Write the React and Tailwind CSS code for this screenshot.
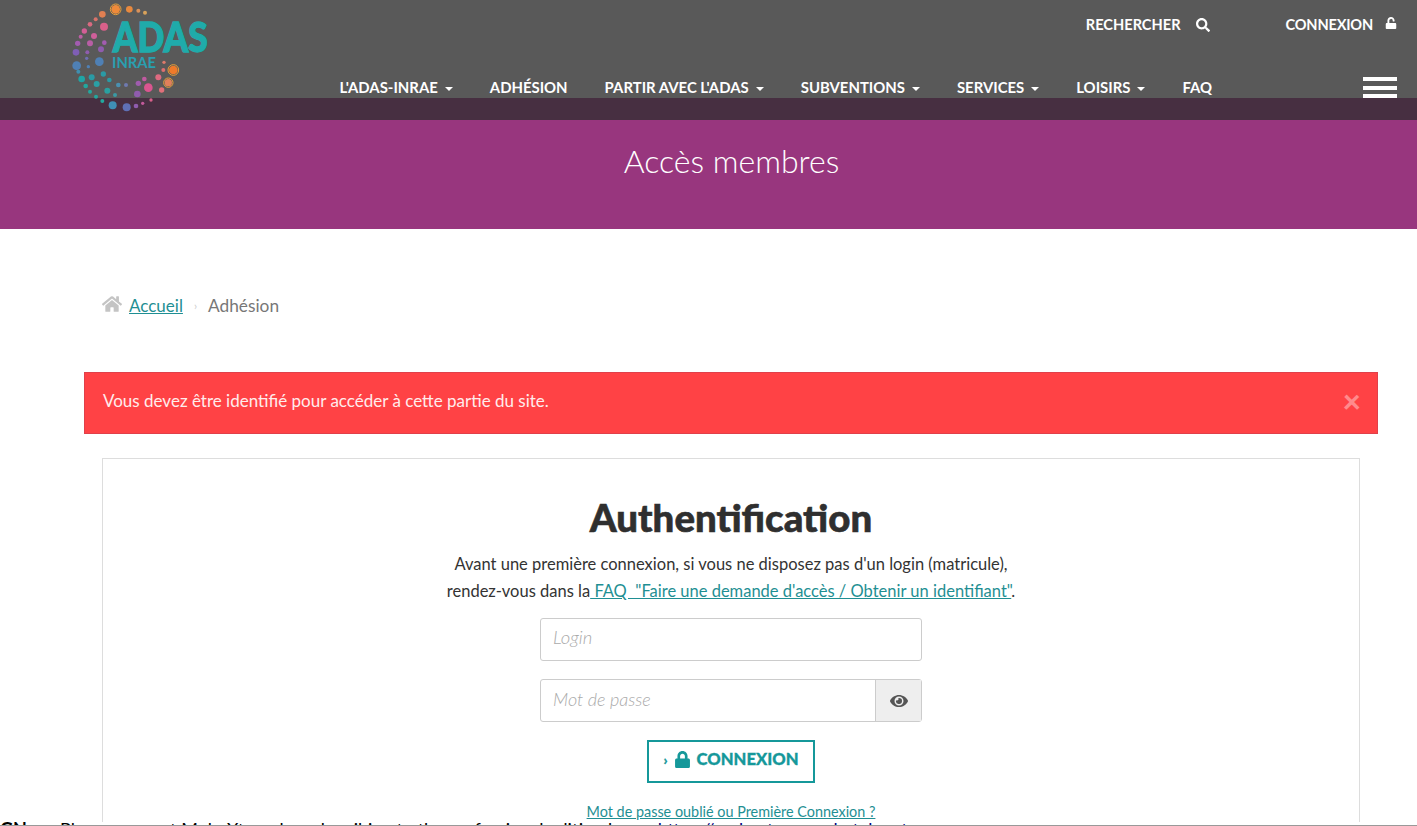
import React from 'react';
import { FaSearch, FaUnlock, FaHome, FaEye, FaLock } from 'react-icons/fa';

const navItems = [
  { label: "L'ADAS-INRAE", caret: true },
  { label: 'ADHÉSION' },
  { label: "PARTIR AVEC L'ADAS", caret: true },
  { label: 'SUBVENTIONS', caret: true },
  { label: 'SERVICES', caret: true },
  { label: 'LOISIRS', caret: true },
  { label: 'FAQ' },
];

// spiral dots of the logo: x, y, radius, colour (in 3x coords of the logo box)
const dots = [
  [285, 38, 6, '#d9a25a'], [265, 32, 6, '#d9915a'], [238, 28, 10, '#e8893e'], [197, 28, 13, '#ee8a3a'],
  [157, 43, 10, '#e07f52'], [137, 58, 6, '#d9736a'], [120, 73, 7, '#d96a80'], [103, 93, 8, '#d35f96'],
  [92, 110, 6, '#bd5ea5'], [83, 130, 8, '#a25cb0'], [78, 157, 10, '#7f5eb5'], [80, 197, 13, '#4f80b5'],
  [85, 215, 6, '#3f8fb0'], [95, 237, 10, '#1fa5a5'], [107, 258, 7, '#22a89e'], [120, 275, 6, '#22a89e'],
  [138, 290, 6, '#22a89e'], [157, 303, 6, '#22a89e'],
  [162, 80, 12, '#d9608a'], [132, 108, 9, '#cf5f9a'], [120, 130, 9, '#b85ea5'], [112, 157, 6, '#8f5cae'],
  [110, 175, 5, '#6f6fb2'], [115, 200, 5, '#4f80b5'], [125, 232, 9, '#2a9aa5'], [140, 252, 9, '#2aa0a5'],
  [172, 272, 9, '#2aa0a0'], [195, 285, 6, '#3a9aa5'],
  [163, 128, 7, '#a25cb0'], [153, 148, 9, '#8f5cae'], [148, 185, 13, '#4f80b5'], [160, 222, 8, '#2a9aa5'],
  [178, 240, 7, '#2a9aa5'], [205, 255, 7, '#4a90b0'], [228, 255, 6, '#6f7ab0'],
  [188, 316, 12, '#3f8fb5'], [230, 322, 12, '#5f70b5'], [258, 318, 7, '#8f5cae'], [278, 310, 5, '#c25a9a'],
  [303, 300, 5, '#d9608a'], [335, 270, 8, '#e0707a'], [355, 248, 11, '#e0805a'], [325, 232, 9, '#de6a80'],
  [340, 210, 6, '#de7070'], [342, 187, 5, '#de7a6a'], [370, 210, 13, '#ee7a2a'],
  [295, 263, 13, '#d9558f'], [262, 282, 10, '#8f5cae'], [265, 250, 8, '#9f5cae'], [283, 237, 7, '#c05aa0'],
];

function Logo() {
  return (
    <svg viewBox="0 0 600 375" className="absolute left-[50px] top-0 h-[125px] w-[200px]">
      {dots.map(([x, y, r, c], i) => (
        <circle key={i} cx={x} cy={y} r={r} fill={c} />
      ))}
      <circle cx="370" cy="210" r="16" fill="none" stroke="#e8a03a" strokeWidth="3" />
      <circle cx="197" cy="28" r="16" fill="none" stroke="#e8a03a" strokeWidth="3" />
      <circle cx="355" cy="248" r="14" fill="none" stroke="#e8a03a" strokeWidth="3" />
      <text x="188" y="155" fontFamily="Lato, sans-serif" fontWeight="900" fontSize="125" fill="#1fabaa" stroke="#1fabaa" strokeWidth="4" textLength="285" lengthAdjust="spacingAndGlyphs">ADAS</text>
      <text x="186" y="204" fontFamily="Lato, sans-serif" fontWeight="700" fontSize="44" fill="#2a9fb0" textLength="132" lengthAdjust="spacingAndGlyphs">INRAE</text>
    </svg>
  );
}

function Caret() {
  return <span className="ml-[7px] inline-block border-x-[4px] border-t-[4px] border-x-transparent border-t-white align-middle" />;
}

export default function App() {
  return (
    <div className="relative h-[826px] overflow-hidden bg-white font-['Lato',sans-serif] text-[#333]">
      <header className="bg-[#595959]">
        <div className="flex h-[98px] flex-col items-end text-white">
          <div className="flex h-[50px] items-center text-[14.6px] font-bold">
            <span className="flex items-center">RECHERCHER<FaSearch className="ml-[15px] text-[14px]" /></span>
            <span className="ml-[76px] mr-[20px] flex items-center tracking-[-0.2px]">CONNEXION<FaUnlock className="mb-[4px] ml-[12px] text-[12px]" /></span>
          </div>
          <div className="flex h-[48px] items-start">
            <nav className="mr-[205px] mt-[27px] flex gap-[37px] text-[14.9px] font-bold leading-[20px]">
              {navItems.map(item => (
                <span key={item.label}>{item.label}{item.caret && <Caret />}</span>
              ))}
            </nav>
          </div>
        </div>
        <div className="h-[22px] bg-[#472f41]" />
      </header>
      <Logo />
      <div className="absolute right-[20px] top-[77px] flex h-[21px] w-[34px] flex-col justify-between">
        <div className="h-[4px] bg-white" />
        <div className="h-[4px] bg-white" />
        <div className="h-[4px] bg-white" />
      </div>

      <div className="flex h-[109px] justify-center bg-[#98367e] pl-[46px] pt-[21px] text-[32px] font-light leading-[40px] text-white">
        Accès membres
      </div>

      <div className="flex items-center pl-[102px] pt-[65px] text-[17px] leading-[24px] text-[#777]">
        <FaHome className="mb-[4px] text-[20px] text-[#c4c4c4]" />
        <a className="ml-[7px] text-[#1f8f93] underline">Accueil</a>
        <span className="mx-[11px] text-[11px] text-[#ccc]">›</span>
        <span className="text-[17.3px]">Adhésion</span>
      </div>

      <div className="ml-[84px] mt-[54px] flex h-[62px] w-[1294px] items-center justify-between border border-[#e0404a] bg-[#ff4245] pb-[5px] pl-[18px] pr-[16px] text-[17px] text-[#ffecec]">
        <span>Vous devez être identifié pour accéder à cette partie du site.</span>
        <span className="text-[32px] font-black leading-none text-[#ff8a8c]">×</span>
      </div>

      <div className="ml-[102px] mt-[24px] flex h-[380px] w-[1258px] flex-col items-center border border-[#ddd] pt-[34px]">
        <h1 className="text-[38.4px] font-black leading-[48px] text-[#2f2f2f] [-webkit-text-stroke:0.6px_#2f2f2f]">Authentification</h1>
        <p className="mt-[10px] text-center text-[16.5px] leading-[27px] text-[#333]">
          Avant une première connexion, si vous ne disposez pas d'un login (matricule),<br />
          rendez-vous dans la<a className="text-[#1f8f93] underline"> FAQ&nbsp; "Faire une demande d'accès / Obtenir un identifiant"</a>.
        </p>
        <input
          placeholder="Login"
          className="mt-[13px] h-[43px] w-[382px] rounded-[3px] border border-[#ccc] px-[12px] pb-[5px] text-[18.5px] font-light italic placeholder:text-[#aaa]"
        />
        <div className="mt-[18px] flex h-[43px] w-[382px] rounded-[3px] border border-[#ccc]">
          <input
            placeholder="Mot de passe"
            className="min-w-0 flex-1 px-[12px] pb-[2px] text-[18px] font-light italic placeholder:text-[#aaa]"
          />
          <div className="flex w-[46px] items-center justify-center border-l border-[#ccc] bg-[#eee] text-[18px] text-[#555]">
            <FaEye />
          </div>
        </div>
        <button className="mt-[18px] flex h-[43px] w-[168px] items-center justify-center border-[2px] border-[#15989a] pb-[5px] text-[16.6px] font-black text-[#15989a] [-webkit-text-stroke:0.3px_#15989a]">
          <span className="mr-[6px] text-[14px]">›</span>
          <FaLock className="mr-[6px] text-[17px]" />
          CONNEXION
        </button>
        <a className="mt-[20px] text-[14.4px] leading-[18px] text-[#1f8f93] underline">Mot de passe oublié ou Première Connexion ?</a>
      </div>

      {/* console text cut off at the bottom edge */}
      <div className="absolute inset-x-0 top-[822px] h-[4px] overflow-hidden border-b border-[#999] bg-white">
        <div className="-mt-[4px] flex text-[18px] leading-[22px] text-black">
          <span className="w-[60px] font-bold">GN</span>
          <span>Please support MobaXterm by subscribing to the professional edition here:</span>
          <span className="ml-[10px] text-[#000080]">https://mobaxterm.mobatek.net</span>
        </div>
      </div>
    </div>
  );
}
